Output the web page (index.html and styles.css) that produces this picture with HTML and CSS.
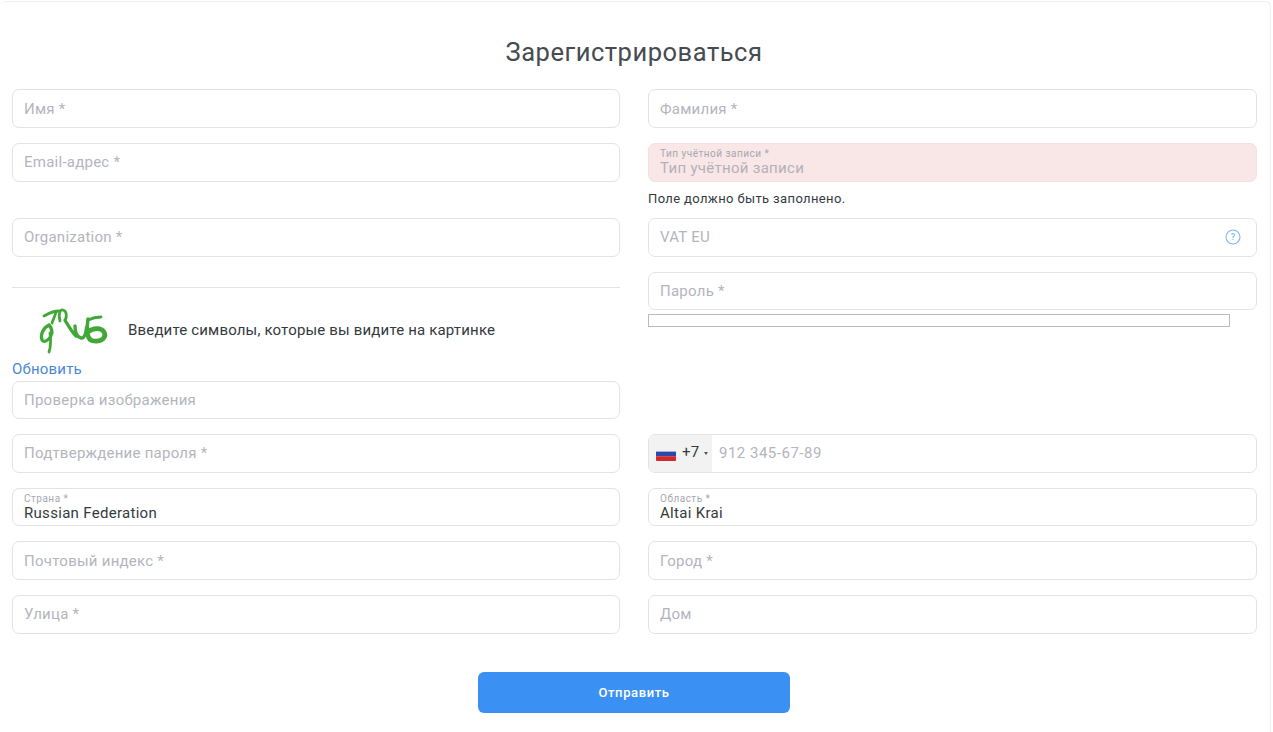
FILE: index.html
```html
<!DOCTYPE html>
<html lang="ru">
<head>
  <meta http-equiv="Content-Type" content="text/html; charset=utf-8" />
  <title>Зарегистрироваться</title>
  <link rel="stylesheet" href="styles.css">
</head>
<body>
  <form class="card">
    <h1 class="title">Зарегистрироваться</h1>
    <div class="form-grid">
      <input class="field" type="text" placeholder="Имя *">
      <input class="field" type="text" placeholder="Фамилия *">

      <input class="field" type="text" placeholder="Email-адрес *">
      <div>
        <div class="field field-label field-error">
          <span class="small-label">Тип учётной записи *</span>
          <span class="value value-muted">Тип учётной записи</span>
        </div>
        <div class="error-text">Поле должно быть заполнено.</div>
      </div>

      <input class="field" type="text" placeholder="Organization *">
      <div class="field field-vat">
        <span class="vat-text">VAT EU</span>
        <svg class="help-icon" width="16" height="16" viewBox="0 0 16 16">
          <circle cx="8" cy="8" r="7" fill="none" stroke="#7db7ee" stroke-width="1.1"/>
          <text x="8" y="11.2" text-anchor="middle" class="help-mark">?</text>
        </svg>
      </div>

      <div class="captcha">
        <hr class="divider">
        <div class="captcha-row">
          <svg class="captcha-img" width="100" height="50" viewBox="0 0 100 50">
            <g fill="none" stroke="#41a838" stroke-width="2.8" stroke-linecap="round" stroke-linejoin="round">
              <path d="M32 11 C37 8 41 6 47 6"/>
              <path d="M44 7 C43 11 41 15 40 18"/>
              <path stroke-width="3.2" d="M37 20 C31 23 28 30 30 35 C33 39 39 33 40 28 C40 25 39 22 37 20"/>
              <path d="M38 28 C39 35 39 41 37 47"/>
              <path d="M48 16 C46 9 48 4 51 5 C55 6 55 12 53 16"/>
              <path stroke-width="3.2" d="M53 15 C56 20 59 26 64 31"/>
              <path stroke-width="3.4" d="M63 21 C63 27 65 32 69 33 C73 34 75 25 76 14"/>
              <path d="M76 15 C80 13 84 12 89 12"/>
              <path stroke-width="4.6" d="M75 23 C75 30 77 36 82 36 C90 37 95 32 92 27 C89 22 81 23 76 27"/>
            </g>
          </svg>
          <span class="captcha-text">Введите символы, которые вы видите на картинке</span>
        </div>
        <a class="refresh" href="#">Обновить</a>
        <input class="field" type="text" placeholder="Проверка изображения">
      </div>
      <div>
        <input class="field" type="password" placeholder="Пароль *">
        <div class="meter"></div>
      </div>

      <input class="field" type="password" placeholder="Подтверждение пароля *">
      <div class="field field-phone">
        <div class="phone-code">
          <svg class="flag" width="20" height="14" viewBox="0 0 20 14">
            <rect width="20" height="14" rx="1" fill="#f2f2f2"/>
            <rect y="4.6" width="20" height="4.7" fill="#2b4aa8"/>
            <path d="M0 9.3h20V13a1 1 0 0 1-1 1H1a1 1 0 0 1-1-1z" fill="#d3282d"/>
          </svg>
          <span class="dial">+7</span>
          <span class="arrow"></span>
        </div>
        <span class="phone-hint">912 345-67-89</span>
      </div>

      <div class="field field-label">
        <span class="small-label">Страна *</span>
        <span class="value">Russian Federation</span>
      </div>
      <div class="field field-label">
        <span class="small-label">Область *</span>
        <span class="value">Altai Krai</span>
      </div>

      <input class="field" type="text" placeholder="Почтовый индекс *">
      <input class="field" type="text" placeholder="Город *">

      <input class="field" type="text" placeholder="Улица *">
      <input class="field" type="text" placeholder="Дом">
    </div>
    <div class="actions">
      <button type="button" class="btn">Отправить</button>
    </div>
  </form>
</body>
</html>
```

FILE: styles.css
```css
* {
  box-sizing: border-box;
}
html, body {
  height: 100%;
}
body {
  margin: 0;
  padding: 1px 2px 0 0;
  overflow: hidden;
  background: #fff;
  font-family: Roboto, "Liberation Sans", sans-serif;
  color: #343a40;
}
.card {
  height: 760px;
  padding: 0 13px 0 12px;
  border: 1px solid #efefef;
  border-bottom: 0;
  border-left: 0;
  border-radius: 6px 6px 0 0;
}
.title {
  margin: 0 1px 0 0;
  height: 87.4px;
  padding-top: 33px;
  text-align: center;
  font-size: 25.5px;
  line-height: 34px;
  font-weight: 400;
  letter-spacing: 0.52px;
  color: #454b50;
}
.form-grid {
  display: grid;
  grid-template-columns: 608px 609px;
  column-gap: 28px;
  row-gap: 15px;
  align-items: start;
}
.field {
  display: block;
  width: 100%;
  height: 38.6px;
  padding: 0 11px;
  border: 1px solid #e2e3e6;
  border-radius: 7px;
  background: #fff;
  font-family: inherit;
  font-size: 15px;
  letter-spacing: 0.25px;
  color: #343a40;
  outline: none;
}
.field::placeholder {
  color: #b3b5bd;
  opacity: 1;
}
.field-label {
  display: flex;
  flex-direction: column;
  justify-content: center;
  padding-top: 2px;
  line-height: 1;
}
.small-label {
  font-size: 10px;
  line-height: 10px;
  letter-spacing: 0.5px;
  color: #a6a8b0;
}
.value {
  font-size: 15px;
  line-height: 17px;
  margin-top: 1px;
  letter-spacing: 0.3px;
  color: #343a40;
}
.value-muted {
  color: #b3b1b8;
}
.field-error {
  background: #f9e6e7;
  border-color: #f3e0e1;
}
.error-text {
  margin-top: 9px;
  height: 12.4px;
  font-size: 13px;
  line-height: 15px;
  letter-spacing: 0.37px;
  color: #343a40;
}
.field-vat {
  display: flex;
  align-items: center;
  justify-content: space-between;
  padding-right: 15px;
}
.vat-text, .phone-hint {
  color: #b3b5bd;
}
.help-icon {
  display: block;
}
.help-mark {
  font-size: 9px;
  font-weight: 500;
  fill: #7db7ee;
}
.divider {
  margin: 15px 0 0;
  border: 0;
  border-top: 1px solid #e2e3e6;
}
.captcha-row {
  display: flex;
  align-items: center;
  height: 69px;
  padding-top: 15px;
}
.captcha-img {
  display: block;
  flex: none;
  margin-right: 16px;
}
.captcha-text {
  font-size: 15px;
  letter-spacing: 0.17px;
  color: #343a40;
}
.refresh {
  display: block;
  height: 20px;
  margin-top: 4px;
  font-size: 15px;
  line-height: 17px;
  letter-spacing: 0.2px;
  color: #4a88d8;
  text-decoration: none;
}
.meter {
  width: 582px;
  height: 13px;
  margin-top: 4px;
  border: 1px solid #bbb;
}
.field-phone {
  display: flex;
  align-items: center;
  padding: 0;
  overflow: hidden;
}
.phone-code {
  display: flex;
  align-items: center;
  flex: none;
  width: 63px;
  height: 100%;
  padding-left: 7px;
  background: #f2f2f3;
}
.flag {
  display: block;
  margin-top: 1px;
}
.dial {
  margin-left: 6px;
  margin-bottom: 2px;
  color: #343a40;
}
.arrow {
  margin-left: 5px;
  border-left: 2px solid transparent;
  border-right: 2px solid transparent;
  border-top: 3px solid #555;
}
.phone-hint {
  margin-left: 7px;
  letter-spacing: 0.5px;
}
.actions {
  display: flex;
  justify-content: center;
  margin: 38px 1px 0 0;
}
.btn {
  width: 312px;
  height: 41px;
  border: 0;
  border-radius: 6px;
  background: #3b91f3;
  font-family: inherit;
  font-size: 13px;
  font-weight: 500;
  letter-spacing: 0.6px;
  color: #fff;
}
```
